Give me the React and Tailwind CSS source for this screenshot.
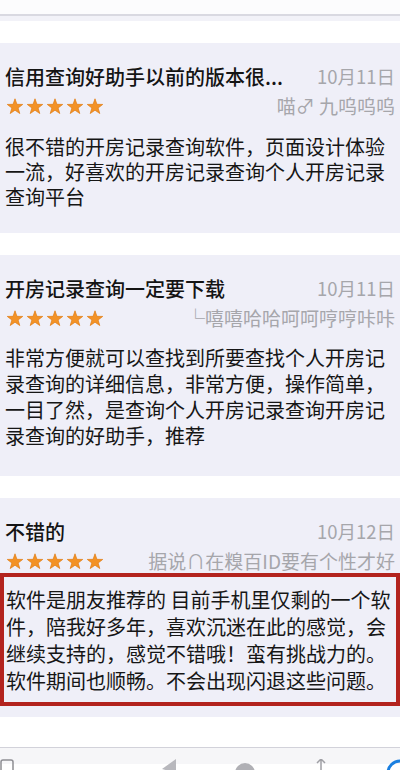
import React from "react";

const FONT = { fontFamily: '"Noto Sans CJK SC", "Noto Sans", sans-serif' };

function Star() {
  return (
    <svg width="20" height="19" viewBox="-1 -1 22 21" className="shrink-0">
      <path
        d="M10 1 L12.12 7.09 L18.56 7.22 L13.42 11.11 L15.29 17.28 L10 13.6 L4.71 17.28 L6.58 11.11 L1.44 7.22 L7.88 7.09 Z"
        fill="#f39226"
        stroke="#e07d14"
        strokeWidth="0.8"
        strokeLinejoin="round"
      />
    </svg>
  );
}

function Stars() {
  return (
    <div className="flex items-center">
      <Star />
      <Star />
      <Star />
      <Star />
      <Star />
    </div>
  );
}

function Header({ title, date, user }) {
  return (
    <div className="px-[5px]">
      <div className="flex h-[28px] items-center justify-between">
        <span className="whitespace-nowrap text-[20px] font-medium text-[#141414]">{title}</span>
        <span className="whitespace-nowrap text-[18.5px] text-[#a6a6ab]">{date}</span>
      </div>
      <div className="mt-[1px] flex h-[28px] items-center justify-between">
        <Stars />
        <span className="whitespace-nowrap text-[19px] text-[#a6a6ab]">{user}</span>
      </div>
    </div>
  );
}

function Body({ lines, lh }) {
  return (
    <div className="text-[20px] text-[#161616]">
      {lines.map((l, i) => (
        <div key={i} className={`whitespace-nowrap ${lh}`}>
          {l}
        </div>
      ))}
    </div>
  );
}

export default function App() {
  return (
    <div className="h-[770px] w-[400px] overflow-hidden bg-white" style={FONT}>
      <div className="h-[14px] bg-[#fcfcfd]" />
      <div className="h-[2px] bg-[#d9d9e1]" />
      <div className="h-[5px] bg-[#f2f2f8]" />
      <div className="h-[22px] bg-white" />

      {/* Card 1 */}
      <div className="bg-[#efeff8] pt-[20px] pb-[24px]">
        <Header title="信用查询好助手以前的版本很..." date="10月11日" user="喵♂ 九呜呜呜" />
        <div className="mt-[14px] px-[5px]">
          <Body
            lh="leading-[25px]"
            lines={[
              "很不错的开房记录查询软件，页面设计体验",
              "一流，好喜欢的开房记录查询个人开房记录",
              "查询平台",
            ]}
          />
        </div>
      </div>

      <div className="h-[22px] bg-white" />

      {/* Card 2 */}
      <div className="bg-[#efeff8] pt-[20px] pb-[27px]">
        <Header title="开房记录查询一定要下载" date="10月11日" user="└嘻嘻哈哈呵呵哼哼咔咔" />
        <div className="mt-[13px] px-[5px]">
          <Body
            lh="leading-[26px]"
            lines={[
              "非常方便就可以查找到所要查找个人开房记",
              "录查询的详细信息，非常方便，操作简单，",
              "一目了然，是查询个人开房记录查询开房记",
              "录查询的好助手，推荐",
            ]}
          />
        </div>
      </div>

      <div className="h-[22px] bg-white" />

      {/* Card 3 */}
      <div className="bg-[#efeff8] pt-[20px] pb-[11px]">
        <Header title="不错的" date="10月12日" user="据说∩在糗百ID要有个性才好" />
        <div className="-mt-[2px] border-[4px] border-[#b3231e] pl-[2px] pt-[9px] pb-[8px]">
          <Body
            lh="leading-[27px]"
            lines={[
              "软件是朋友推荐的 目前手机里仅剩的一个软",
              "件，陪我好多年，喜欢沉迷在此的感觉，会",
              "继续支持的，感觉不错哦！蛮有挑战力的。",
              "软件期间也顺畅。不会出现闪退这些问题。",
            ]}
          />
        </div>
      </div>

      <div className="h-[30px] bg-white" />
      <div className="h-[1px] bg-[#d2d2da]" />
      <div className="flex h-[16px] items-start justify-between bg-[#f6f6f8] px-0 pt-[11px]">
        <svg width="14" height="14" viewBox="0 0 14 14">
          <rect x="1" y="1" width="12" height="12" rx="2" fill="none" stroke="#8e8e93" strokeWidth="1.5" />
        </svg>
        <svg width="18" height="14" viewBox="0 0 18 14" className="ml-[90px]">
          <path d="M16 0 L2 10 L16 14 Z" fill="#b8b8bd" />
        </svg>
        <svg width="22" height="14" viewBox="0 0 22 14">
          <path d="M1 14 A10 10 0 0 1 21 14 Z" fill="#b0b0b5" />
        </svg>
        <svg width="18" height="14" viewBox="0 0 18 14">
          <path d="M9 0 L9 14 M5 4 L9 0 L13 4" fill="none" stroke="#a0a0a5" strokeWidth="1.5" />
        </svg>
        <svg width="14" height="14" viewBox="0 0 14 14">
          <path d="M2 14 A12 12 0 0 1 14 2" fill="none" stroke="#1a7fe0" strokeWidth="3" />
        </svg>
      </div>
    </div>
  );
}
